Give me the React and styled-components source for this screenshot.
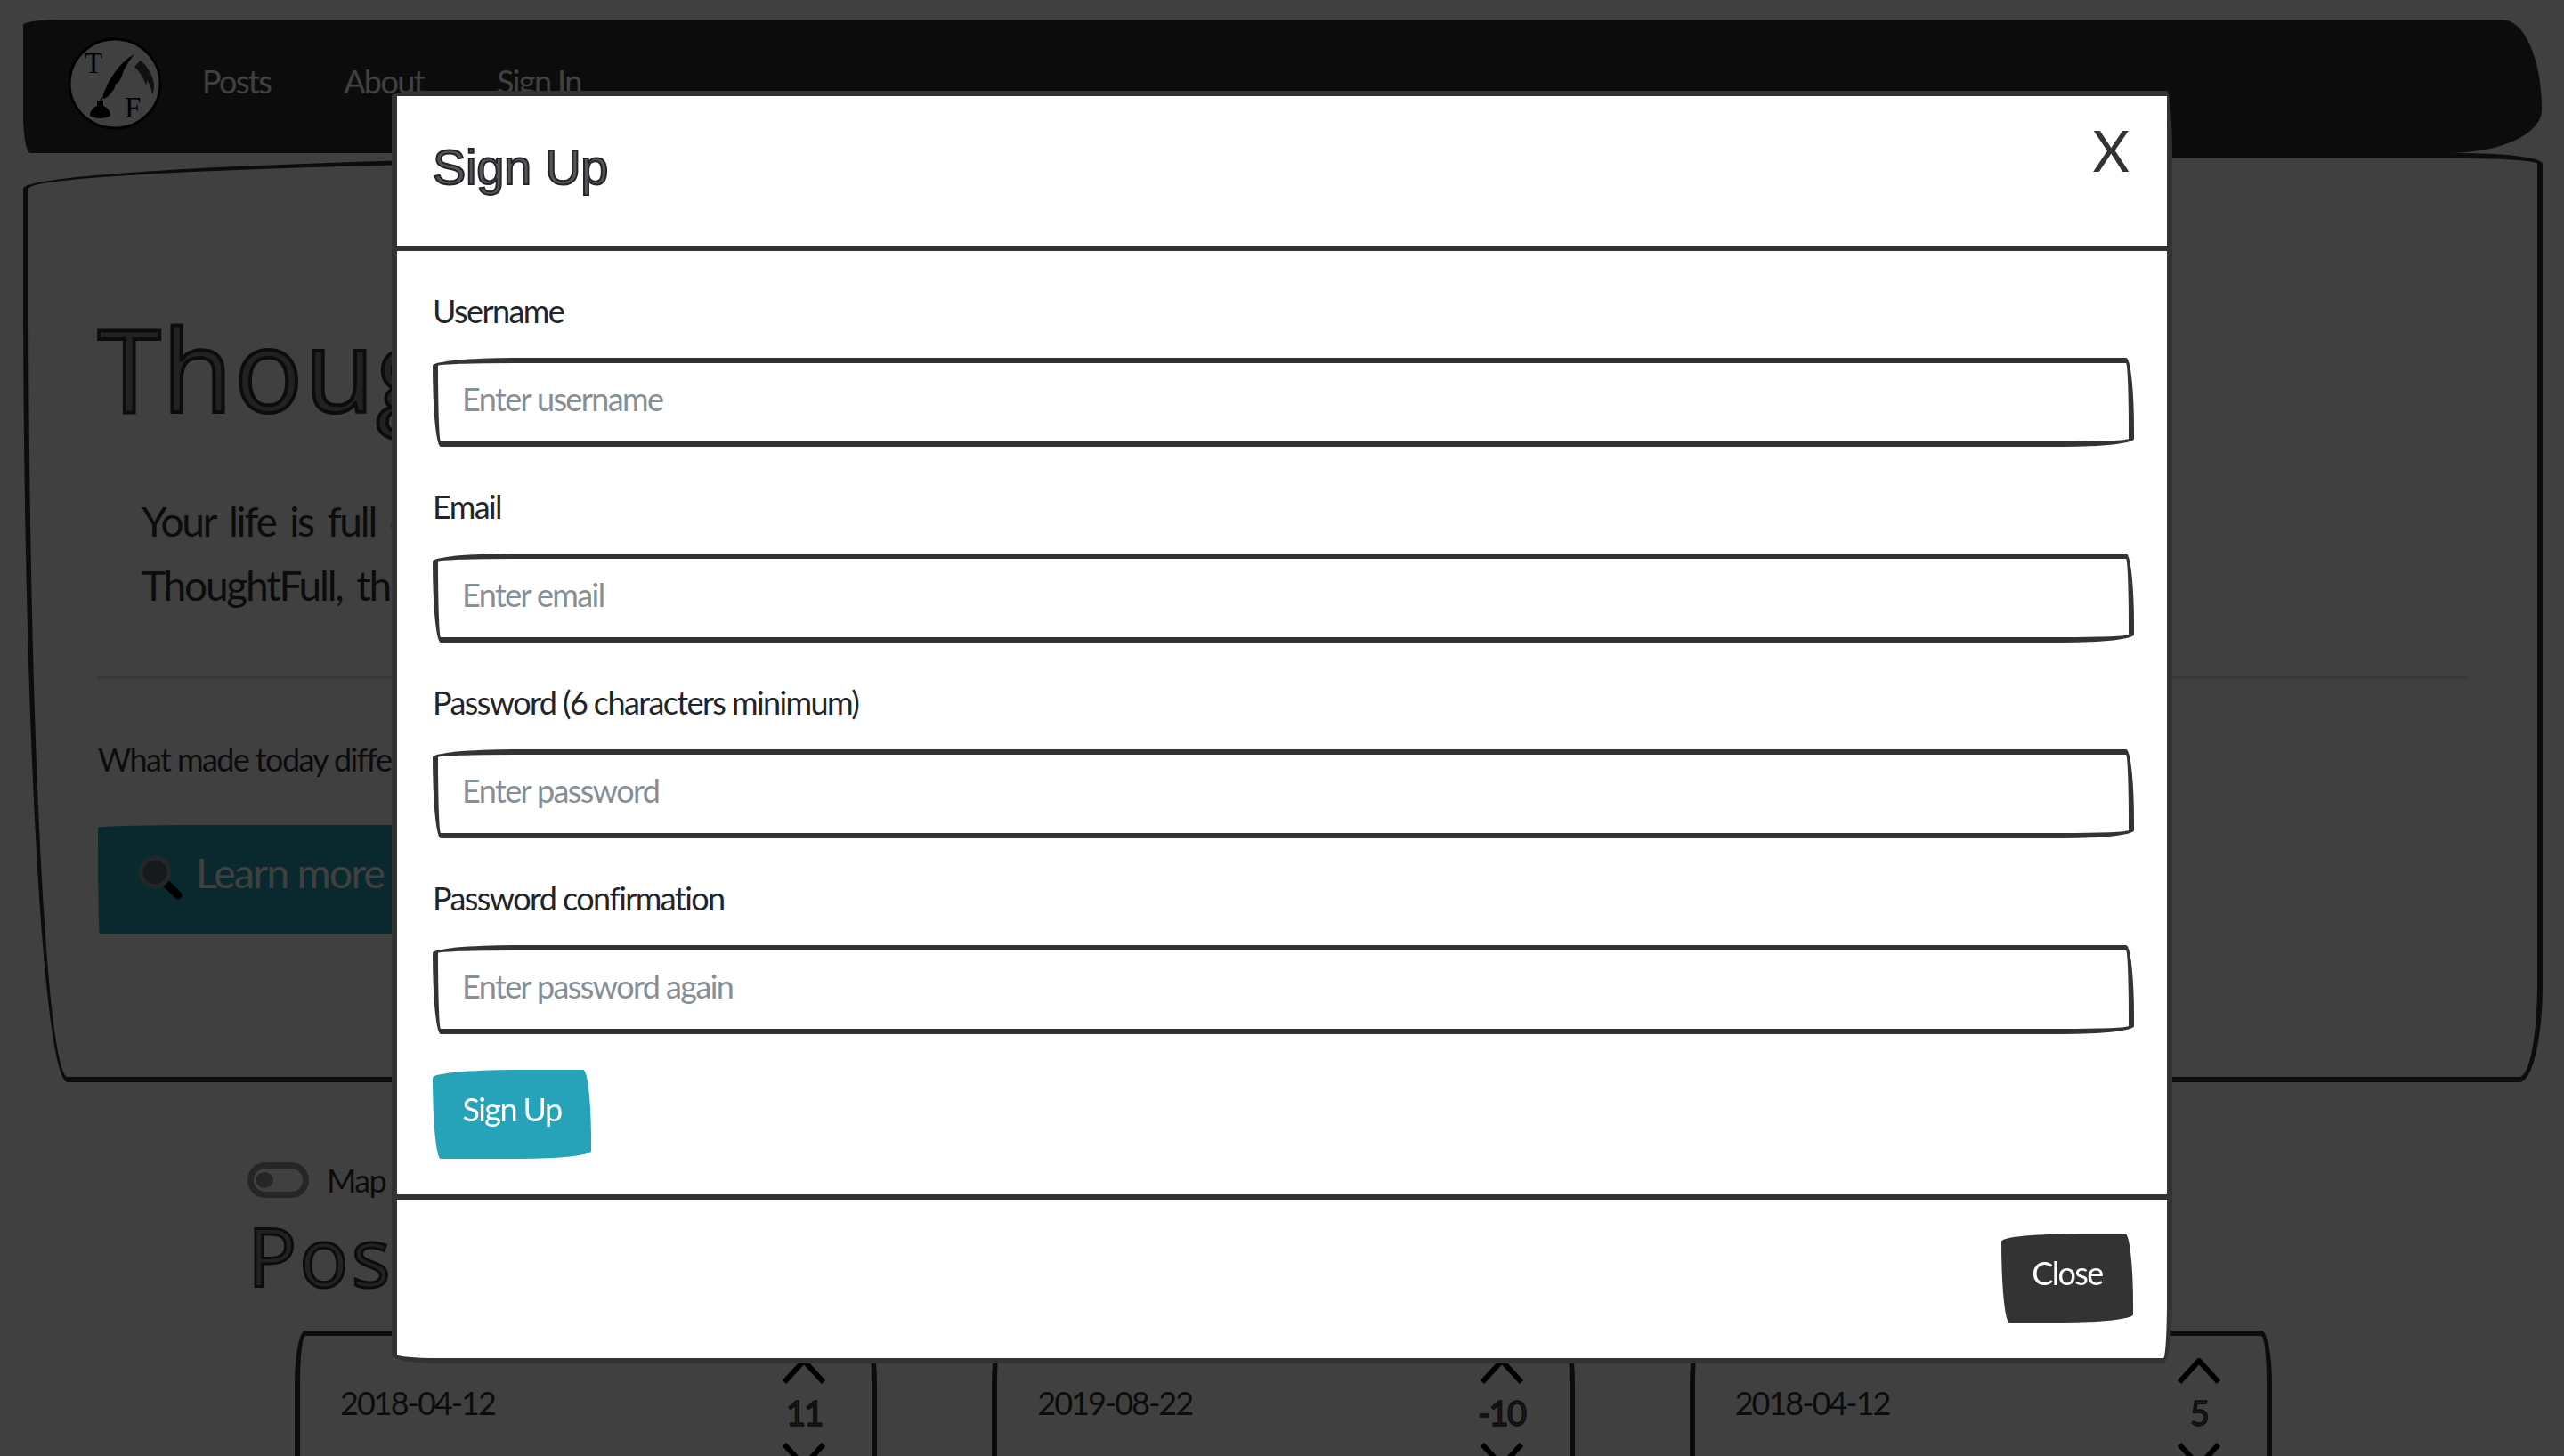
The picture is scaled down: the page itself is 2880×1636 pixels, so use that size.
import React from 'react';
import styled, { createGlobalStyle } from 'styled-components';

const sketchRadius = '255px 25px 225px 25px/25px 225px 25px 255px';
const handFont = 'Lato, "Liberation Sans", Arial, sans-serif';
const sketchFont = '"Open Sans", "Liberation Sans", Arial, sans-serif';

const GlobalStyle = createGlobalStyle`
  html, body {
    margin: 0;
    height: 100%;
    overflow: hidden;
    background: #fff;
  }
  * {
    box-sizing: border-box;
  }
  body {
    font-family: ${handFont};
    font-size: 36px;
    line-height: 1.5;
    letter-spacing: -1.6px;
    color: #333;
  }
`;

const Page = styled.div`
  height: 1636px;
  overflow: hidden;
  padding: 22px 25px 0 26px;
`;

const Navbar = styled.nav`
  height: 150px;
  background: #333;
  border-radius: 42px 44px 105px 8px/6px 100px 48px 42px;
  padding: 20px 50px;
  display: flex;
  align-items: flex-start;
`;

const LogoLink = styled.a`
  display: block;
  width: 106px;
  height: 106px;
  margin-right: 45px;
`;

const NavLinks = styled.div`
  display: flex;
  gap: 82px;
  padding-top: 19px;
`;

const NavLink = styled.a`
  color: #fff;
  line-height: 60px;
`;

const Jumbotron = styled.section`
  height: 1044px;
  border: 6px solid #333;
  border-radius: 1100px 90px 26px 50px/40px 12px 110px 900px;
  padding: 0 78px;
  margin-right: -1px;
`;

const HeroTitle = styled.h1`
  margin: 0;
  padding-top: 158px;
  font-family: ${sketchFont};
  font-size: 128px;
  font-weight: 400;
  line-height: 156px;
  letter-spacing: 2px;
  color: #888;
  -webkit-text-stroke: 4px #333;
`;

const Lead = styled.p`
  margin: 58px 0 0 49px;
  font-size: 46px;
  line-height: 72px;
  letter-spacing: -2.2px;
  word-spacing: 6px;
`;

const Rule = styled.hr`
  margin: 66px 0 0;
  border: 0;
  border-top: 3px solid #ddd;
`;

const Tagline = styled.p`
  margin: 60px 0 0;
  line-height: 60px;
`;

const LearnButton = styled.a`
  margin-top: 44px;
  width: 480px;
  height: 123px;
  background: #2ba4ba;
  color: #fff;
  font-size: 46px;
  padding: 19px 44px;
  display: flex;
  align-items: flex-start;
  gap: 14px;
  border-radius: 255px 6px 225px 4px/6px 225px 6px 255px;
`;

const PostsSection = styled.section`
  padding: 90px 0 0 252px;
`;

const ToggleRow = styled.label`
  display: flex;
  align-items: center;
  gap: 20px;
  height: 40px;
  line-height: 34px;
`;

const Toggle = styled.span`
  width: 69px;
  height: 40px;
  border: 7px solid #999;
  border-radius: 20px;
  padding: 4px 2px;
  display: block;
`;

const ToggleKnob = styled.span`
  display: block;
  width: 20px;
  height: 18px;
  border-radius: 50%;
  background: #999;
`;

const PostsTitle = styled.h2`
  margin: 10px 0 0;
  font-family: ${sketchFont};
  font-size: 92px;
  font-weight: 400;
  line-height: 110px;
  letter-spacing: 3px;
  color: #888;
  -webkit-text-stroke: 3px #333;
`;

const CardGrid = styled.div`
  margin: 29px 0 0 53px;
  width: 2221px;
  display: grid;
  grid-template-columns: repeat(3, 1fr);
  column-gap: 129px;
`;

const Card = styled.article`
  height: 400px;
  border: 6px solid #333;
  border-radius: 12px 12px 12px 12px/60px 60px 60px 60px;
  padding: 25px 48px 0 45px;
  display: flex;
  justify-content: space-between;
  align-items: flex-start;
`;

const CardDate = styled.span`
  line-height: 60px;
  padding-top: 20px;
  letter-spacing: -2px;
`;

const Votes = styled.div`
  width: 56px;
  display: flex;
  flex-direction: column;
  align-items: center;
`;

const VoteCount = styled.span`
  height: 66px;
  padding-top: 4px;
  font-size: 38px;
  line-height: 56px;
  white-space: nowrap;
  color: #666;
  -webkit-text-stroke: 1.5px #333;
`;

const Backdrop = styled.div`
  position: fixed;
  inset: 0;
  background: rgba(0, 0, 0, 0.75);
`;

const ModalLayer = styled.div`
  position: fixed;
  inset: 0;
  padding-top: 102px;
  display: flex;
  justify-content: center;
  align-items: flex-start;
`;

const Modal = styled.div`
  width: 2000px;
  height: 1430px;
  background: #fff;
  border: 6px solid #333;
  border-radius: 40px 6px 10px 50px/6px 80px 70px 10px;
  display: flex;
  flex-direction: column;
`;

const ModalHeader = styled.header`
  height: 174px;
  flex: none;
  border-bottom: 6px solid #333;
  padding: 0 42px 0 40px;
  display: flex;
  justify-content: space-between;
  align-items: flex-start;
`;

const ModalTitle = styled.h5`
  margin: 38px 0 0;
  font-family: "Liberation Sans", Arial, sans-serif;
  font-size: 56px;
  font-weight: 400;
  line-height: 84px;
  letter-spacing: -0.3px;
  color: #555;
  -webkit-text-stroke: 2px #212529;
`;

const CloseIcon = styled.button`
  border: 0;
  background: none;
  padding: 0;
  margin-top: 13px;
  font-family: ${handFont};
  font-size: 64px;
  line-height: 96px;
  color: #333;
`;

const ModalBody = styled.form`
  flex: 1;
  padding: 40px 37px 40px 40px;
`;

const Field = styled.div`
  margin-bottom: 40px;
`;

const FieldLabel = styled.label`
  display: block;
  height: 60px;
  margin-bottom: 20px;
  line-height: 54px;
  color: #212529;
`;

const TextInput = styled.input`
  display: block;
  width: 100%;
  height: 100px;
  padding: 0 27px 8px;
  border: 6px solid #333;
  border-radius: ${sketchRadius};
  background: #fff;
  outline: none;
  font-family: ${handFont};
  font-size: 36px;
  letter-spacing: -1.6px;
  color: #333;

  &::placeholder {
    color: #868e96;
    opacity: 1;
  }
`;

const ActionButton = styled.button`
  display: block;
  width: ${p => p.$width}px;
  height: 100px;
  padding: 0 0 12px;
  border: 0;
  border-radius: ${sketchRadius};
  background: ${p => p.$bg};
  color: #fff;
  font-family: ${handFont};
  font-size: 36px;
  letter-spacing: -1.6px;
`;

const ModalFooter = styled.footer`
  flex: none;
  height: 184px;
  border-top: 6px solid #333;
  padding: 38px 38px 0 0;
  display: flex;
  justify-content: flex-end;
  align-items: flex-start;
`;

const Logo = () => (
  <svg width="106" height="106" viewBox="0 0 106 106">
    <ellipse cx="53" cy="52" rx="51" ry="50" fill="#fff" stroke="#000" strokeWidth="3" />
    <path d="M82 26c7 6 13 15 15 26 0 5 0 9-2 12-1-7-3-12-6-16 0 2 0 4-1 6-2-8-7-15-13-21 2-3 5-5 7-7z" fill="#000" opacity="0.75" />
    <path d="M75 19C61 26 45 46 39 68l2 1c4-2 6-4 8-7 3-3 5-7 4-9 6-3 8-9 10-16 3-6 7-12 12-18z" fill="#000" />
    <path d="M38 68l-1 8" stroke="#000" strokeWidth="2" />
    <path d="M33 71h7v6c5 2 8 6 8 11-5 4-18 4-23 0 0-5 3-9 8-11z" fill="#000" />
    <text x="19" y="40" fontFamily="Liberation Serif, serif" fontSize="33" letterSpacing="0" fill="#000">T</text>
    <text x="64" y="90" fontFamily="Liberation Serif, serif" fontSize="33" letterSpacing="0" fill="#000">F</text>
  </svg>
);

const Magnifier = () => (
  <svg width="52" height="52" viewBox="0 0 52 52" style={{ marginTop: 14 }}>
    <path d="M30 30l16 16" stroke="#000" strokeWidth="9" strokeLinecap="round" />
    <circle cx="20" cy="20" r="16" fill="#5a6a70" stroke="#8a9aa0" strokeWidth="5" />
  </svg>
);

const Chevron = ({ down }) => (
  <svg width="50" height="29" viewBox="0 0 50 29">
    <polyline
      points={down ? '3,2 25,26 47,2' : '3,27 25,3 47,27'}
      fill="none"
      stroke="#000"
      strokeWidth="6"
    />
  </svg>
);

const posts = [
  { date: '2018-04-12', votes: 11 },
  { date: '2019-08-22', votes: -10 },
  { date: '2018-04-12', votes: 5 },
];

const fields = [
  { label: 'Username', placeholder: 'Enter username', type: 'text' },
  { label: 'Email', placeholder: 'Enter email', type: 'email' },
  { label: 'Password (6 characters minimum)', placeholder: 'Enter password', type: 'password' },
  { label: 'Password confirmation', placeholder: 'Enter password again', type: 'password' },
];

const App = () => (
  <>
    <GlobalStyle />
    <Page>
      <Navbar>
        <LogoLink>
          <Logo />
        </LogoLink>
        <NavLinks>
          <NavLink>Posts</NavLink>
          <NavLink>About</NavLink>
          <NavLink>Sign In</NavLink>
        </NavLinks>
      </Navbar>
      <Jumbotron>
        <HeroTitle>ThoughtFull</HeroTitle>
        <Lead>
          Your life is full of thoughts.
          <br />
          ThoughtFull, the place to share them.
        </Lead>
        <Rule />
        <Tagline>What made today different?</Tagline>
        <LearnButton>
          <Magnifier />
          Learn more
        </LearnButton>
      </Jumbotron>
      <PostsSection>
        <ToggleRow>
          <Toggle>
            <ToggleKnob />
          </Toggle>
          Map
        </ToggleRow>
        <PostsTitle>Posts</PostsTitle>
        <CardGrid>
          {posts.map((post, i) => (
            <Card key={i}>
              <CardDate>{post.date}</CardDate>
              <Votes>
                <Chevron />
                <VoteCount>{post.votes}</VoteCount>
                <Chevron down />
              </Votes>
            </Card>
          ))}
        </CardGrid>
      </PostsSection>
    </Page>
    <Backdrop />
    <ModalLayer>
      <Modal>
        <ModalHeader>
          <ModalTitle>Sign Up</ModalTitle>
          <CloseIcon type="button">X</CloseIcon>
        </ModalHeader>
        <ModalBody>
          {fields.map(f => (
            <Field key={f.label}>
              <FieldLabel>{f.label}</FieldLabel>
              <TextInput type={f.type} placeholder={f.placeholder} />
            </Field>
          ))}
          <ActionButton type="button" $width={178} $bg="#27a3b9">Sign Up</ActionButton>
        </ModalBody>
        <ModalFooter>
          <ActionButton type="button" $width={148} $bg="#333">Close</ActionButton>
        </ModalFooter>
      </Modal>
    </ModalLayer>
  </>
);

export default App;
